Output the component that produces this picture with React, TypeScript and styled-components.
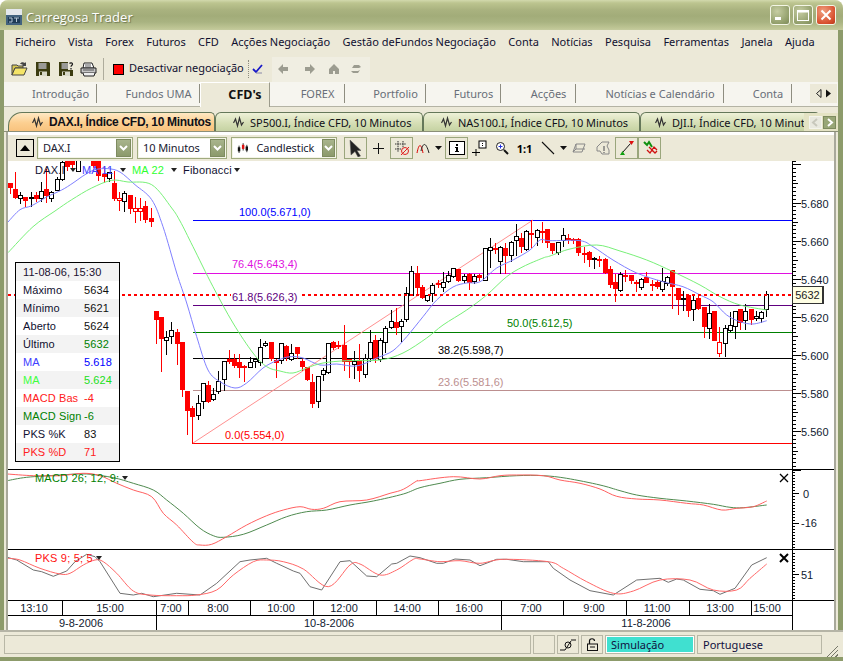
import React from "react";
import styled, { createGlobalStyle } from "styled-components";

const Global = createGlobalStyle`
  html, body { margin: 0; padding: 0; background: #fff; }
  #root { width: 843px; height: 661px; }
`;

const UI = `"Noto Sans", "Liberation Sans", sans-serif`;
const CH = `"Liberation Sans", Arial, sans-serif`;

const Win = styled.div`
  width: 843px; height: 661px; display: flex; flex-direction: column; overflow: hidden;
  background: #ece9d8; border-radius: 8px 8px 0 0; font-family: ${UI}; font-size: 11px; color: #000;
`;
const TitleBar = styled.div`
  height: 30px; flex: none; display: flex; align-items: center; padding: 3px 7px 0 6px; box-sizing: border-box;
  background: linear-gradient(180deg, #d2d9ad 0, #bcc48f 3px, #a9b27f 10px, #a2ac79 16px, #a9b381 22px, #bec594 28px, #c5cb9e 30px);
`;
const TitleText = styled.span`
  margin-left: 4px; flex: 1; color: #fff; font: 13px "Open Sans", sans-serif; letter-spacing: 0.1px; text-shadow: 1px 1px 1px #6b7550;
`;
const WinBtn = styled.div<{ $close?: boolean }>`
  width: 20px; height: 20px; margin: -4px 0 0 3px; box-sizing: border-box; border: 1px solid #f4f6e6; border-radius: 3px;
  display: flex; align-items: center; justify-content: center;
  background: ${p => p.$close ? "radial-gradient(circle at 35% 30%, #f0a080, #d8502e 70%, #b83a1c)" : "radial-gradient(circle at 35% 30%, #c6cda2, #8f9c68 75%, #7e8a5c)"};
`;
const Body = styled.div`
  flex: 1; min-height: 0; display: flex; flex-direction: column;
  border-left: 4px solid #8d9b6b; border-right: 5px solid #8d9b6b; box-sizing: border-box;
`;
const MenuBar = styled.div`
  height: 26px; flex: none; display: flex; align-items: center; padding: 0 0 4px 11px; gap: 12.4px; color: #101030; box-sizing: border-box;
`;
const MenuItem = styled.span`white-space: pre;`;
const ToolBar = styled.div`
  height: 26px; flex: none; display: flex; align-items: center; padding-left: 7px;
`;
const IconSlot = styled.span<{ $w: number; $ml?: number }>`
  width: ${p => p.$w}px; margin-left: ${p => p.$ml ?? 0}px; flex: none; display: flex; align-items: center; justify-content: center;
`;
const Sep = styled.span`width: 1px; height: 22px; background: #aeac9c; margin: 0 9px 0 6px; flex: none;`;
const RedSquare = styled.span`width: 9px; height: 9px; background: #f00; border: 1px solid #000; flex: none; margin-right: 5px;`;
const ToolLabel = styled.span`color: #101030; width: 119px; flex: none; white-space: nowrap; padding-bottom: 3px; letter-spacing: -0.05px;`;
const DotSep = styled.span`width: 0; height: 18px; border-left: 1px dotted #8e8d80; flex: none;`;
const NavGroup = styled.div`
  margin-left: 9px; height: 25px; display: flex; align-items: center; background: #f0eee2; padding-left: 5px; width: 98px; box-sizing: border-box; flex: none;
`;
const NavTabs = styled.div`
  height: 25px; flex: none; display: flex; align-items: stretch; background: #f6f5ef; border-bottom: 1px solid #b4b3a4; box-sizing: border-box;
`;
const NavTab = styled.div<{ $w: number; $active?: boolean }>`
  width: ${p => p.$w}px; flex: none; display: flex; align-items: center; justify-content: center; box-sizing: border-box; position: relative; padding: 0 0 2px 20px;
  color: ${p => p.$active ? "#111" : "#686e78"}; font-weight: ${p => p.$active ? 700 : 400}; font-size: ${p => p.$active ? 12.5 : 11}px;
  background: ${p => p.$active ? "#ece9d8" : "transparent"};
  ${p => p.$active ? "border: 1px solid #fff; border-right: 1px solid #9c9b8c; border-bottom: none; margin-bottom:-1px;" : ""}
  &::after { content: ""; position: absolute; right: 0; top: 2px; bottom: 3px; width: 1px; background: ${p => p.$active ? "transparent" : "#8e8d80"}; }
`;
const NavArrows = styled.div`
  margin-left: auto; margin-right: 1px; width: 27px; background: #ece9d8; margin-top: 2px; margin-bottom: 3px; display: flex; align-items: center; justify-content: space-around; padding: 0 4px; box-sizing: border-box;
`;
const DocStrip = styled.div`
  height: 25px; flex: none; display: flex; align-items: flex-end; padding-left: 4px; position: relative; overflow: hidden; border-bottom: 1px solid #8b8f78; box-sizing: border-box;
`;
const DocTab = styled.div<{ $w: number; $active?: boolean; $pl: number }>`
  width: ${p => p.$w}px; flex: none; height: 19px; box-sizing: border-box; position: relative; display: flex; align-items: center; padding-left: ${p => p.$pl}px; gap: 5px; white-space: nowrap; overflow: hidden;
  font-size: ${p => p.$active ? 12 : 11}px; font-weight: ${p => p.$active ? 700 : 400}; color: #101018;
  background: ${p => p.$active ? "linear-gradient(180deg, #ffe8c4, #fccf90 55%, #f8c37e)" : "linear-gradient(180deg, #eef1d8, #d6dfb6 55%, #c5d2a2)"};
  border: 1px solid #65785a; border-bottom: none; border-radius: ${p => p.$active ? "14px" : "6px"} 5px 0 0;
  ${p => p.$active ? "font-family: " + CH + "; letter-spacing: -0.3px;" : "letter-spacing: -0.03px;"}
`;
const DocScroll = styled.div`
  position: absolute; right: 0; top: 6px; width: 34px; height: 18px; background: #e4e3c4; display: flex; align-items: center; gap: 1px; padding-left: 5px; box-sizing: border-box;
`;
const DocBtn = styled.div<{ $on?: boolean }>`
  width: 13px; height: 13px; box-sizing: border-box; border: 1px solid ${p => p.$on ? "#7d8a5e" : "#f4f4ec"}; background: ${p => p.$on ? "#98a676" : "#e9e9df"}; display: flex; align-items: center; justify-content: center;
`;
const ChartFrame = styled.div`
  flex: 1; min-height: 0; display: flex; flex-direction: column; padding-top: 3px; box-sizing: border-box; background: #fff;
  border-right: 2px solid #a8a89a; border-left: 2px solid #a8a89a; margin-left: 2px; width: 830px;
`;
const ChartTools = styled.div`
  height: 26px; flex: none; display: flex; align-items: center; background: #ece9d8; padding-left: 8px;
`;
const Toggle = styled.div`
  width: 18px; height: 18px; box-sizing: border-box; border: 1px solid #000; display: flex; align-items: center; justify-content: center; margin-right: 3px; flex: none;
  &::before { content: ""; border: 5px solid transparent; border-bottom: 6px solid #000; border-top: 0; }
`;
const Combo = styled.div<{ $w: number }>`
  width: ${p => p.$w}px; height: 22px; box-sizing: border-box; border: 1px solid #a0ab7f; background: #fff; display: flex; align-items: center; padding-left: 5px; margin-right: 4px; flex: none; gap: 8px; font-size: 11px; letter-spacing: -0.1px; color: #202030; box-shadow: inset 0 0 0 1px #f4f4e8;
`;
const ComboText = styled.span`flex: 1; white-space: nowrap; margin-top: -2px;`;
const ComboBtn = styled.div`
  width: 15px; height: 18px; margin-right: 1px; background: linear-gradient(180deg, #a8b48c, #8c9a6c); border: 1px solid #7e8b60; box-sizing: border-box; display: flex; align-items: center; justify-content: center;
`;
const ToolBtn = styled.div<{ $w: number; $on?: boolean; $ml?: number }>`
  width: ${p => p.$w}px; height: 22px; flex: none; box-sizing: border-box; margin-left: ${p => p.$ml ?? 0}px; display: flex; align-items: center; justify-content: center;
  border: ${p => p.$on ? "1.5px solid #9aa67c" : "0"};
`;
const Canvas = styled.div`position: relative; width: 826px; height: 469px; flex: none; background: #fff;`;
const ChartSvg = styled.svg`display: block;`;
const Legend = styled.div<{ $top: number }>`
  position: absolute; left: 27px; top: ${p => p.$top}px; display: flex; align-items: center; font: 11px ${CH}; height: 14px; white-space: nowrap;
`;
const LegendText = styled.span<{ $c: string; $w?: number }>`color: ${p => p.$c}; letter-spacing: 0.2px; flex: none; ${p => p.$w ? `width: ${p.$w}px;` : ""}`;
const Caret = styled.span<{ $mr?: number }>`
  flex: none; width: 0; height: 0; border: 3px solid transparent; border-top: 4px solid #222; border-bottom: 0; margin: 0 ${p => p.$mr ?? 0}px 0 3px;
`;
const Info = styled.div`
  position: absolute; left: 7px; top: 101px; width: 105px; background: #fff; border: 1px solid #000; font: 11px ${CH}; box-sizing: border-box; letter-spacing: 0.1px;
`;
const InfoRow = styled.div<{ $alt?: boolean }>`
  height: 18px; display: grid; grid-template-columns: 61px 1fr; align-items: center; padding-left: 7px; background: ${p => p.$alt ? "#f3f3f3" : "#fff"}; white-space: nowrap;
`;
const InfoHead = styled(InfoRow)`display: block; line-height: 18px; color: #201030;`;
const InfoCell = styled.span<{ $c: string }>`color: ${p => p.$c};`;
const PriceTag = styled.div`
  position: absolute; left: 784px; top: 125px; width: 32px; height: 18px; box-sizing: border-box; background: #ffffe4; border: 1px solid #333; border-right: 2px solid #333; font: 11px ${CH}; text-align: center; line-height: 16px; color: #222;
`;
const Status = styled.div`
  height: 31px; flex: none; margin: 0 -5px 0 -4px; padding: 3px 5px 3px 4px; box-sizing: border-box; display: flex; align-items: stretch; gap: 2px; background: #ece9d8; border-bottom: 4px solid #8d9b6b; border-top: 2px solid #b5b4a6; position: relative;
`;
const Pane = styled.div<{ $w: number; $teal?: boolean }>`
  width: ${p => p.$w}px; flex: none; box-sizing: border-box; border: 1px solid #b8b7a6; display: flex; align-items: center; justify-content: ${p => p.$teal ? "flex-start" : "center"};
  ${p => p.$teal ? "background: #40e0d0; outline: 1px solid #fff; outline-offset: -2px; padding-left: 5px; color: #101040;" : ""}
`;
const PaneText = styled(Pane)`justify-content: flex-start; padding-left: 5px; color: #101040;`;
const Grip = styled.div`
  position: absolute; right: 5px; bottom: 0; width: 13px; height: 13px;
  background: repeating-linear-gradient(135deg, #ece9d8 0 1px, #77776a 1px 2px, #ece9d8 2px 3px);
  clip-path: polygon(100% 0, 100% 100%, 0 100%);
`;

/* ------- chart data: [high, top of body, bottom of body, low, kind]; y in 3× units measured from y=190 ------- */
type C = [number, number, number, number, "w" | "r" | "h"];
const candles: C[] = [
  [-21,-21,-9,9,"r"],[-58,-3,20,24,"r"],[4,16,24,39,"w"],[19,22,29,47,"r"],[2,21,24,49,"w"],[4,16,24,34,"r"],[-26,4,24,34,"w"],[-66,-3,14,37,"r"],
  [-1,7,23,32,"w"],[-41,-33,-1,-1,"w"],[-100,-84,-33,-31,"w"],[-100,-100,-71,-60,"r"],[-100,-100,-78,-70,"r"],[-100,-100,-58,-58,"w"],[-200,-200,-190,-190,"w"],[-200,-200,-190,-190,"w"],
  [-100,-100,-76,-70,"r"],[-100,-86,-46,-31,"r"],[-76,-48,-43,-24,"r"],[-56,-54,-36,-26,"w"],
  [-60,-21,25,30,"r"],[4,24,31,59,"h"],[0,9,32,62,"w"],[15,15,53,68,"r"],[18,55,62,95,"h"],[22,55,62,90,"h"],[30,47,87,95,"r"],[50,85,93,107,"r"],
  [365,364,386,458,"r"],[380,381,444,543,"r"],[420,440,451,492,"w"],[393,421,439,460,"w"],[415,427,458,522,"r"],[457,457,598,617,"r"],[600,604,660,732,"r"],[645,654,678,760,"r"],
  [612,640,674,686,"w"],[575,579,634,655,"w"],[570,586,632,635,"r"],[590,611,628,630,"w"],[540,572,604,608,"w"],[512,514,566,600,"w"],[478,508,514,520,"r"],[490,507,524,530,"r"],
  [490,516,532,560,"r"],[522,528,532,572,"r"],[497,517,530,532,"w"],[500,506,513,530,"w"],[445,472,515,525,"w"],[450,458,466,468,"w"],[455,457,505,510,"r"],[505,510,515,562,"r"],
  [455,460,510,520,"w"],[463,468,500,510,"r"],[458,490,506,510,"w"],[470,472,490,505,"r"],[505,512,527,540,"r"],[530,532,568,570,"r"],[548,576,639,650,"r"],[558,559,634,650,"w"],
  [530,540,553,570,"w"],[458,460,547,548,"w"],[450,456,472,478,"r"],[450,465,468,475,"r"],[402,465,512,540,"r"],[507,507,513,560,"r"],[480,512,522,565,"w"],[460,510,540,572,"r"],
  [490,505,553,560,"w"],[418,457,505,512,"w"],[432,450,505,516,"r"],[440,450,506,513,"w"],[405,415,457,485,"w"],[357,394,410,415,"w"],[350,396,412,432,"r"],[385,394,409,452,"w"],
  [288,308,388,392,"w"],[225,244,314,316,"w"],[226,250,292,312,"r"],[283,290,322,325,"r"],[312,314,331,333,"w"],[275,284,308,333,"w"],[268,278,281,292,"r"],[242,277,290,303,"w"],
  [240,256,272,275,"w"],[232,233,258,260,"w"],[235,238,269,272,"r"],[250,257,270,275,"w"],[245,251,276,296,"r"],[250,257,272,278,"w"],[250,254,260,270,"r"],[170,175,269,270,"w"],
  [142,170,181,230,"w"],[157,175,178,190,"r"],[165,170,214,248,"w"],[155,175,196,250,"r"],[150,157,194,212,"w"],[98,137,151,195,"w"],[125,143,168,185,"r"],[118,124,177,180,"w"],
  [88,130,133,170,"r"],[115,119,142,165,"w"],[92,122,125,155,"r"],[115,118,155,170,"r"],
  [158,160,180,190,"r"],[152,156,187,192,"w"],[112,136,150,168,"w"],[130,144,147,158,"r"],[140,146,148,158,"r"],[142,148,185,195,"r"],[168,189,191,215,"r"],[180,186,207,228,"r"],
  [198,204,206,233,"w"],[195,206,208,228,"r"],[200,208,245,250,"r"],[226,237,282,291,"r"],[250,277,293,332,"r"],[243,252,301,302,"w"],[238,254,257,272,"r"],[255,256,270,280,"r"],
  [268,276,279,303,"r"],[262,268,290,296,"w"],[243,262,275,277,"r"],[268,282,285,300,"r"],[268,276,288,295,"r"],[232,272,296,302,"w"],[255,262,278,285,"w"],[238,239,287,353,"r"],
  [293,294,328,372,"r"],[300,323,326,360,"w"],[315,316,361,378,"r"],[315,331,358,390,"w"],[312,323,355,358,"r"],[350,352,407,440,"r"],[340,370,415,445,"w"],[362,364,449,450,"r"],
  [408,457,490,497,"h"],[402,415,460,497,"w"],[363,404,420,422,"w"],[362,364,408,445,"w"],[357,357,395,416,"r"],[340,364,390,416,"w"],[355,358,388,403,"r"],[360,377,383,390,"w"],
  [360,365,384,396,"w"],[300,313,358,378,"w"],
];
const dx = (766.3 - 9.67) / (candles.length - 1);
const cx = (i: number) => Math.round(766.3 - (candles.length - 1 - i) * dx) + 0.5;
const Y = (v: number) => Math.round(190 + v / 3) + 0.5;

const smooth = (a: number[][]) => {
  let d = `M${a[0][0]} ${a[0][1]}`;
  for (let i = 0; i < a.length - 1; i++) {
    const p0 = a[i - 1] ?? a[i], p1 = a[i], p2 = a[i + 1], p3 = a[i + 2] ?? p2;
    const c1x = p1[0] + (p2[0] - p0[0]) / 6, c1y = p1[1] + (p2[1] - p0[1]) / 6;
    const c2x = p2[0] - (p3[0] - p1[0]) / 6, c2y = p2[1] - (p3[1] - p1[1]) / 6;
    d += `C${c1x.toFixed(1)} ${c1y.toFixed(1)} ${c2x.toFixed(1)} ${c2y.toFixed(1)} ${p2[0].toFixed(1)} ${p2[1].toFixed(1)}`;
  }
  return d;
};
const jag = (a: number[][]) => "M" + a.map(p => `${p[0].toFixed(1)} ${p[1].toFixed(1)}`).join("L");

const blue = smooth([[8,222],[20,209.7],[31.7,205.7],[46.7,197],[61.7,190],[73,183],[85,174.7],[95,169.7],[108,168.7],[120,172],[135,184.7],[151.7,199.7],[163,226.7],[176.7,273],[186.7,303],[196.7,336.7],[208,370],[220,381.7],[235,388],[246.7,383],[263,368],[276.7,360.7],[290,356.7],[303,358],[320,365],[336.7,364],[356.7,366],[376.7,358],[393,350.7],[406.7,336.7],[423,316.7],[436.7,300],[453,287],[466.7,283],[480,281.7],[496.7,268],[513,260],[530,250],[540,240],[550,240.7],[580,240.7],[593,246.7],[613,260],[636.7,273],[663,281.7],[683,286.7],[700,295],[713,301.7],[726.7,315],[740,321.7],[753,324],[766.7,320.7]]);
const green = smooth([[8,252.7],[33,226.7],[55,211],[71.7,199.7],[91.7,188],[111.7,180.3],[128,182],[151.7,184.7],[171.7,208],[180,221],[193,246.7],[213,286.7],[233,323],[253,353],[266.7,366.7],[280,371],[293,373],[306.7,368],[323,363],[346.7,360.7],[380,360],[403,353],[426.7,338],[443,325],[466.7,310],[486.7,295],[506.7,276.7],[523,266.7],[543,258],[550,256],[570,249],[596.7,245],[620,251],[646.7,260],[673,271.7],[700,285],[720,296.7],[740,305],[766.7,310]]);

const z6 = (a: number[][]) => a.map(([x, y]) => [x / 3, 465 + y / 3]);
const z7 = (a: number[][]) => a.map(([x, y]) => [420 + x / 3, 465 + y / 3]);
const macdR = smooth([...z6([[22,27],[100,32],[180,32],[250,25],[300,32],[350,55],[400,75],[455,95],[490,145],[530,180],[580,232],[600,240],[635,238],[680,215],[740,180],[800,152],[850,135],[900,125],[935,133],[970,130],[1020,110],[1100,105],[1170,85],[1210,73],[1250,48]]),...z7([[0,47],[100,35],[180,42],[240,32],[290,30],[370,32],[420,45],[480,55],[540,72],[590,94],[650,102],[720,105],[800,115],[850,120],[905,135],[950,130],[1000,125],[1040,108]])]);
const macdG = smooth([...z6([[22,47],[80,37],[180,30],[260,27],[340,38],[400,55],[460,75],[500,105],[550,145],[600,190],[640,212],[670,217],[730,208],[800,180],[860,155],[920,140],[980,135],[1050,120],[1120,108],[1210,87]]),...z7([[0,68],[60,55],[120,43],[200,38],[290,32],[370,32],[440,40],[540,60],[600,77],[650,90],[720,100],[800,108],[880,118],[930,127],[970,128],[1040,120]])]);
const pksK = jag([...z6([[22,277],[50,285],[100,315],[125,320],[160,334],[200,318],[225,290],[260,268],[285,275],[300,290],[360,385],[400,390],[425,385],[460,395],[530,385],[600,390],[650,355],[720,290],[750,285],[800,280],[830,295],[880,318],[900,325],[930,365],[965,375],[1020,290],[1050,287],[1100,333],[1130,335],[1175,297],[1190,295],[1230,273]]),...z7([[0,278],[50,295],[70,295],[105,282],[150,285],[180,302],[230,283],[260,283],[310,290],[385,290],[400,310],[450,345],[510,377],[580,390],[650,345],[720,340],[745,352],[770,342],[790,345],[840,373],[880,377],[900,388],[945,370],[995,300],[1040,278]])]);
const pksD = smooth([...z6([[22,280],[60,285],[120,310],[180,327],[210,325],[250,300],[285,285],[310,290],[350,325],[400,378],[450,390],[530,392],[590,390],[650,375],[700,330],[760,290],[800,285],[850,290],[910,312],[985,365],[1050,300],[1080,297],[1140,330],[1190,315],[1240,283]]),...z7([[0,282],[60,290],[120,287],[180,295],[250,283],[385,290],[430,310],[500,350],[580,385],[640,378],[720,345],[810,345],[880,375],[950,375],[990,340],[1040,297]])]);

const fibs = [
  { y: 220.5, c: "#0000ff", t: "100.0(5.671,0)", x: 239, ty: 216 },
  { y: 273.5, c: "#e010e0", t: "76.4(5.643,4)", x: 232, ty: 268 },
  { y: 305.5, c: "#600080", t: "61.8(5.626,3)", x: 232, ty: 301 },
  { y: 332.5, c: "#008000", t: "50.0(5.612,5)", x: 507, ty: 327 },
  { y: 358.5, c: "#000", t: "38.2(5.598,7)", x: 438, ty: 354 },
  { y: 390.5, c: "#bc8f8f", t: "23.6(5.581,6)", x: 438, ty: 386 },
  { y: 443.5, c: "#f00", t: "0.0(5.554,0)", x: 225, ty: 439 },
];
const priceTicks: { y: number; l: number; t?: string }[] = [];
for (let p = 5540; p <= 5702; p += 2) {
  const y = Math.round(202.5 + (5680 - p) * 1.908) + 0.5;
  const maj = p % 20 === 0;
  priceTicks.push({ y, l: maj ? 8 : p % 10 === 0 ? 5 : 3, t: maj && p >= 5560 && p <= 5680 ? "5." + String(p).slice(1) : undefined });
}
const timeSeps = [62, 156, 188, 250, 313, 376, 438, 501, 563, 626, 689, 751];
const timeLabels: [string, number][] = [["13:10",34],["15:00",110],["7:00",171],["8:00",218],["10:00",281],["12:00",344],["14:00",407],["16:00",469],["7:00",531],["9:00",594],["11:00",657],["13:00",720],["15:00",767]];
const dateLabels: [string, number][] = [["9-8-2006",81],["10-8-2006",329],["11-8-2006",646]];

const Chart = () => (
  <ChartSvg width={826} height={469} viewBox="8 161 826 469" fontFamily={CH} fontSize={11}>
    {fibs.map(f => <line key={f.t} x1={193} x2={792} y1={f.y} y2={f.y} stroke={f.c} />)}
    <line x1={193} y1={443} x2={533} y2={220} stroke="#ff9090" />
    <g shapeRendering="crispEdges">
      {candles.map((c, i) => {
        const x = cx(i), col = c[4] === "w" ? "#000" : "#f00";
        const top = Y(c[1]), bot = Math.max(Y(c[2]), Y(c[1]) + 1);
        return (
          <g key={i}>
            <line x1={x} x2={x} y1={Y(c[0])} y2={Y(c[3])} stroke={col} />
            {c[4] === "r"
              ? <rect x={x - 2.5} y={top - 0.5} width={5} height={bot - top + 1} fill="#f00" />
              : <rect x={x - 2} y={top} width={4} height={bot - top} fill="#fff" stroke={col} />}
          </g>
        );
      })}
    </g>
    <path d={blue} fill="none" stroke="#8080ff" />
    <path d={green} fill="none" stroke="#78f078" />
    <line x1={8} x2={792} y1={295} y2={295} stroke="#f00" strokeWidth={2} strokeDasharray="3 3" />
    <rect x={231} y={291} width={68} height={11} fill="#fff" />
    {fibs.map(f => <text key={f.t} x={f.x} y={f.ty} fill={f.c}>{f.t}</text>)}

    <path d={macdG} fill="none" stroke="#4f8a4f" />
    <path d={macdR} fill="none" stroke="#ff6060" />
    <path d={pksK} fill="none" stroke="#707070" />
    <path d={pksD} fill="none" stroke="#ff6868" />

    <g stroke="#000" shapeRendering="crispEdges">
      <line x1={8} x2={834} y1={469.5} y2={469.5} />
      <line x1={8} x2={834} y1={549.5} y2={549.5} />
      <line x1={8} x2={834} y1={600.5} y2={600.5} />
      <line x1={8} x2={792} y1={615.5} y2={615.5} />
      <line x1={792.5} x2={792.5} y1={161} y2={630} />
      {priceTicks.map(t => <line key={t.y} x1={793} x2={793 + t.l} y1={t.y} y2={t.y} />)}
      {Array.from({ length: 26 }, (_, i) => { const y = 472 + i * 3; const m = y === 493 || y === 523; return <line key={y} x1={793} x2={m ? 799 : 795} y1={y + 0.5} y2={y + 0.5} />; })}
      {Array.from({ length: 16 }, (_, i) => { const y = 553 + i * 3; const m = y === 574; return <line key={y} x1={793} x2={m ? 799 : 795} y1={y + 0.5} y2={y + 0.5} />; })}
      {timeSeps.map(x => <line key={x} x1={x + 0.5} x2={x + 0.5} y1={600} y2={615} />)}
      <line x1={156.5} x2={156.5} y1={615} y2={630} />
      <line x1={501.5} x2={501.5} y1={615} y2={630} />
    </g>
    {priceTicks.filter(t => t.t).map(t => <text key={t.y} x={801} y={t.y + 4} fill="#102030">{t.t}</text>)}
    <text x={803} y={498} fill="#102030">0</text>
    <text x={801} y={527} fill="#102030">-16</text>
    <text x={801} y={579} fill="#102030">51</text>
    {timeLabels.map(([t, x]) => <text key={x} x={x} y={612} textAnchor="middle" fill="#102030">{t}</text>)}
    {dateLabels.map(([t, x]) => <text key={x} x={x} y={627} textAnchor="middle" fill="#102030">{t}</text>)}
    <path d="M780 474l8 8M788 474l-8 8" stroke="#000" strokeWidth={1.3} fill="none" />
    <path d="M780 554l8 8M788 554l-8 8" stroke="#000" strokeWidth={2} fill="none" />
  </ChartSvg>
);

/* ------- icons ------- */
const Wave = () => (
  <svg width="12" height="12" viewBox="0 0 12 12"><path d="M0.5 7l2-4 2 7 2-8 2 7 2-3" fill="none" stroke="#333" strokeWidth="1.2" /></svg>
);
const Chevron = ({ c = "#fff", left = false }: { c?: string; left?: boolean }) => (
  <svg width="9" height="9" viewBox="0 0 9 9"><path d={left ? "M6 1L2 4.5 6 8" : "M3 1l4 3.5L3 8"} fill="none" stroke={c} strokeWidth="2" /></svg>
);
const DownChevron = () => (
  <svg width="9" height="8" viewBox="0 0 9 8"><path d="M1 2l3.5 3.5L8 2" fill="none" stroke="#fff" strokeWidth="2" /></svg>
);
const Floppy = ({ q }: { q?: boolean }) => (
  <svg width="16" height="16" viewBox="0 0 16 16">
    <path d="M1 1h13l1 1v13H1z" fill="#3c3c10" />
    <rect x="3.5" y="2" width="8" height="6" fill="#9a9a96" />
    <rect x="4" y="10.5" width="8" height="4.5" fill="#d8d8c8" />
    <rect x="5" y="11" width="2" height="3" fill="#3c3c10" />
    {q && <path d="M10 1h6v8h-6z" fill="#ece9d8" />}
    {q && <path d="M11.5 2.5c1-1.200 3.200-.8 3 .8-.1 1-1.500 1-1.500 2.500M13 7v1.500" fill="none" stroke="#222" strokeWidth="1.300" />}
  </svg>
);
const Folder = () => (
  <svg width="17" height="16" viewBox="0 0 17 16">
    <path d="M1 4h5l1 1h5v2H4L1 14z" fill="#d8c850" stroke="#444" />
    <path d="M1 14l3-7h12l-3 7z" fill="#f4e468" stroke="#444" />
    <path d="M9 3c1-2 3-2 5-1l1-1v4h-4l1-1c-1-1-2-1-3-1z" fill="#444" />
  </svg>
);
const Printer = () => (
  <svg width="17" height="15" viewBox="0 0 17 15">
    <path d="M4 1h8l2 5H3z" fill="#fff" stroke="#222" />
    <path d="M1 6h15v5H1z" fill="#c8c8c8" stroke="#222" />
    <path d="M3 11l1 3h10l1-3" fill="#eee" stroke="#222" />
    <path d="M5 3h6M5 5h6M3 8h11" stroke="#555" />
  </svg>
);
const Check = () => (
  <svg width="11" height="10" viewBox="0 0 11 10">
    <path d="M1 5l3 3 6-7" fill="none" stroke="#1818c8" strokeWidth="1.800" />
    <path d="M4 9h6" stroke="#8888a8" />
  </svg>
);
const GrayArrow = ({ d }: { d: string }) => (
  <svg width="12" height="12" viewBox="0 0 12 12"><path d={d} fill="#9c9c90" /></svg>
);
const Cursor = () => (
  <svg width="14" height="18" viewBox="0 0 14 18"><path d="M1 1l11 10.500H8l3.500 5.500-2.500 1L6 12.500 2 16z" fill="#222" stroke="#555" strokeWidth=".5" /></svg>
);
const Plus = () => <svg width="13" height="13" viewBox="0 0 13 13"><path d="M6.500 1v11M1 6.500h11" stroke="#111" /></svg>;
const GridOff = () => (
  <svg width="16" height="16" viewBox="0 0 16 16"><path d="M4 1v11M9 1v7M1 4h11M1 9h6" stroke="#333" strokeDasharray="1.500 .8" fill="none" /><circle cx="11" cy="11" r="3.500" fill="none" stroke="#e02020" /><path d="M7 15l8-8" stroke="#e02020" /></svg>
);
const Indic = () => <svg width="14" height="12" viewBox="0 0 14 12"><path d="M1 11C3 1 5 1 7 11" fill="none" stroke="#d00" /><path d="M5 9C7 0 10 0 13 11" fill="none" stroke="#222" /></svg>;
const SmallCaret = () => <svg width="7" height="4" viewBox="0 0 7 4"><path d="M0 0h7L3.500 4z" fill="#111" /></svg>;
const InfoIcon = () => <svg width="16" height="14" viewBox="0 0 16 14"><rect x=".5" y=".5" width="15" height="13" fill="#fff" stroke="#000" /><path d="M7 3h2v2H7zM6 6h3v4h1v1H6v-1h1V7H6z" fill="#000" /></svg>;
const CrossBox = () => <svg width="16" height="16" viewBox="0 0 16 16"><path d="M5 9v7M1 12.500h8" stroke="#000" /><rect x="8" y="1" width="7" height="7" fill="#fff" stroke="#000" /><path d="M11 3h1v1h-1zM11 5h1v1h-1z" /></svg>;
const Magnifier = () => <svg width="14" height="14" viewBox="0 0 14 14"><circle cx="5.500" cy="5.500" r="4" fill="#fff" stroke="#222" /><path d="M9 9l4 4" stroke="#111" strokeWidth="2" /><path d="M5.500 3.500v4M3.500 5.500h4" stroke="#2030e0" /></svg>;
const Line = () => <svg width="14" height="14" viewBox="0 0 14 14"><path d="M1 1l12 12" stroke="#111" strokeWidth="1.100" /></svg>;
const Eraser = () => <svg width="14" height="10" viewBox="0 0 14 10"><path d="M4 1h9L10 9H1zM1 9l3-3h9M4 6V1" fill="#ece9d8" stroke="#888" /></svg>;
const Bell = () => <svg width="14" height="14" viewBox="0 0 14 14"><path d="M1 6l5-5h7l-2 4 2 4v4H6L4 10H1z" fill="none" stroke="#888" /><path d="M8 5v5M8 11v1" stroke="#777" strokeWidth="1.400" /></svg>;
const AutoFit = () => <svg width="16" height="16" viewBox="0 0 16 16"><path d="M3.500 12.500l8-9" stroke="#111" /><path d="M10 1h5l-2.500 4z" fill="#e01010" /><path d="M1 15h5l-2.500-4z" fill="#10a010" /></svg>;
const MultiTrade = () => <svg width="16" height="16" viewBox="0 0 16 16"><path d="M2 2l3 3 2-3 3 5" stroke="#109010" strokeWidth="2" fill="none" /><path d="M5 10l3 3 2-3 3 3 2-2M7 7l3 3 2-3 3 3" stroke="#d01010" strokeWidth="1.300" fill="none" /></svg>;
const Candles = () => (
  <svg width="14" height="13" viewBox="0 0 14 13"><path d="M2.500 3v9M7.500 0v9M12 2v9" stroke="#111" /><rect x="1" y="5" width="3" height="5" fill="#111" /><rect x="6" y="2" width="3" height="5" fill="#e01010" /><rect x="10.500" y="4" width="3" height="5" fill="#111" /></svg>
);
const Plug = () => <svg width="16" height="12" viewBox="0 0 16 12"><path d="M0 11h5M11 1h5" stroke="#111" /><circle cx="8" cy="6" r="3" fill="none" stroke="#111" /><path d="M5 11l6-9" stroke="#111" /></svg>;
const Lock = () => <svg width="11" height="13" viewBox="0 0 11 13"><rect x=".5" y="6" width="10" height="6.500" fill="none" stroke="#111" /><path d="M2.500 6V3c0-3 5-3 5 0" fill="none" stroke="#111" strokeWidth="1.200" /><path d="M3 9h5" stroke="#111" /></svg>;
const AppLogo = () => (
  <svg width="16" height="16" viewBox="0 0 16 16"><rect width="16" height="6" fill="#e4e8ec" /><rect y="6" width="16" height="10" fill="#42627e" /><rect x="2" y="8" width="12" height="6" fill="#1f3b56" /><path d="M3 9h3v4H3M8 9h5M10.500 9v4" stroke="#b4c6d6" fill="none" /></svg>
);
const MinGlyph = () => <svg width="12" height="12" viewBox="0 0 12 12"><rect x="1" y="8" width="6" height="3" fill="#fff" /></svg>;
const MaxGlyph = () => <svg width="14" height="14" viewBox="0 0 14 14"><rect x="1.500" y="2.500" width="11" height="10" fill="none" stroke="#fff" /><rect x="1" y="2" width="12" height="2.500" fill="#fff" /></svg>;
const CloseGlyph = () => <svg width="12" height="12" viewBox="0 0 12 12"><path d="M1.500 1.500l9 9M10.500 1.500l-9 9" stroke="#fff" strokeWidth="2" /></svg>;

const menu = ["Ficheiro","Vista","Forex","Futuros","CFD","Acções Negociação","Gestão deFundos Negociação","Conta","Notícias","Pesquisa","Ferramentas","Janela","Ajuda"];
const navs: { t: string; w: number; a?: boolean }[] = [
  { t: "Introdução", w: 93 },{ t: "Fundos UMA", w: 103 },{ t: "CFD's", w: 70, a: true },{ t: "FOREX", w: 75 },{ t: "Portfolio", w: 81 },{ t: "Futuros", w: 75 },{ t: "Acções", w: 75 },{ t: "Notícias e Calendário", w: 148 },{ t: "Conta", w: 68 },
];
const docs = [
  { t: "DAX.I, Índice CFD, 10 Minutos", w: 207, pl: 23, a: true },
  { t: "SP500.I, Índice CFD, 10 Minutos", w: 208, pl: 17 },
  { t: "NAS100.I, Índice CFD, 10 Minutos", w: 217, pl: 17 },
  { t: "DJI.I, Índice CFD, 10 Minutos", w: 180, pl: 14 },
];
const rows: [string, string, string, string][] = [
  ["Máximo","5634","#101030","#101010"],["Mínimo","5621","#101030","#101010"],["Aberto","5624","#101030","#101010"],["Último","5632","#101030","#008000"],
  ["MA","5.618","#4040ff","#0000ff"],["MA","5.624","#40ff40","#20e020"],["MACD Bas","-4","#ff2020","#ff2020"],["MACD Sign","-6","#008000","#008000"],["PKS %K","83","#101030","#101010"],["PKS %D","71","#ff2020","#ff2020"],
];

export default function App() {
  return (
    <Win>
      <Global />
      <TitleBar>
        <AppLogo />
        <TitleText>Carregosa Trader</TitleText>
        <WinBtn><MinGlyph /></WinBtn>
        <WinBtn><MaxGlyph /></WinBtn>
        <WinBtn $close><CloseGlyph /></WinBtn>
      </TitleBar>
      <Body>
        <MenuBar>{menu.map(m => <MenuItem key={m}>{m}</MenuItem>)}</MenuBar>
        <ToolBar>
          <IconSlot $w={17}><Folder /></IconSlot>
          <IconSlot $w={16} $ml={7}><Floppy /></IconSlot>
          <IconSlot $w={16} $ml={7}><Floppy q /></IconSlot>
          <IconSlot $w={17} $ml={6}><Printer /></IconSlot>
          <Sep />
          <RedSquare />
          <ToolLabel>Desactivar negociação</ToolLabel>
          <DotSep />
          <IconSlot $w={12} $ml={2}><Check /></IconSlot>
          <NavGroup>
            <IconSlot $w={12}><GrayArrow d="M1 6l5-5v3h5v4H6v3z" /></IconSlot>
            <IconSlot $w={12} $ml={15}><GrayArrow d="M11 6L6 1v3H1v4h5v3z" /></IconSlot>
            <IconSlot $w={12} $ml={12}><GrayArrow d="M6 1l5 5v5H7V8H5v3H1V6z" /></IconSlot>
            <IconSlot $w={12} $ml={10}><GrayArrow d="M2 5l2-3h5l2 2-2 1H4zM1 8l2 2h5l2-3-2 1H3z" /></IconSlot>
          </NavGroup>
        </ToolBar>
        <NavTabs>
          {navs.map(n => <NavTab key={n.t} $w={n.w} $active={n.a}>{n.t}</NavTab>)}
          <NavArrows>
            <svg width="6" height="9" viewBox="0 0 6 9"><path d="M5 .5v8L.5 4.500z" fill="none" stroke="#222" /></svg>
            <svg width="6" height="9" viewBox="0 0 6 9"><path d="M1 .5v8l5-4z" fill="#111" /></svg>
          </NavArrows>
        </NavTabs>
        <DocStrip>
          {docs.map(d => <DocTab key={d.t} $w={d.w} $pl={d.pl} $active={d.a}><Wave />{d.t}</DocTab>)}
          <DocScroll>
            <DocBtn><Chevron c="#c8c8bc" left /></DocBtn>
            <DocBtn $on><Chevron /></DocBtn>
          </DocScroll>
        </DocStrip>
        <ChartFrame>
          <ChartTools>
            <Toggle />
            <Combo $w={96}><ComboText>DAX.I</ComboText><ComboBtn><DownChevron /></ComboBtn></Combo>
            <Combo $w={90}><ComboText>10 Minutos</ComboText><ComboBtn><DownChevron /></ComboBtn></Combo>
            <Combo $w={106}><Candles /><ComboText>Candlestick</ComboText><ComboBtn><DownChevron /></ComboBtn></Combo>
            <ToolBtn $w={23} $on $ml={3}><Cursor /></ToolBtn>
            <ToolBtn $w={23}><Plus /></ToolBtn>
            <ToolBtn $w={23} $on><GridOff /></ToolBtn>
            <ToolBtn $w={19}><Indic /></ToolBtn>
            <ToolBtn $w={13}><SmallCaret /></ToolBtn>
            <ToolBtn $w={23} $on><InfoIcon /></ToolBtn>
            <ToolBtn $w={22}><CrossBox /></ToolBtn>
            <ToolBtn $w={23}><Magnifier /></ToolBtn>
            <ToolBtn $w={23}><b>1:1</b></ToolBtn>
            <ToolBtn $w={24}><Line /></ToolBtn>
            <ToolBtn $w={7}><SmallCaret /></ToolBtn>
            <ToolBtn $w={24}><Eraser /></ToolBtn>
            <ToolBtn $w={24}><Bell /></ToolBtn>
            <ToolBtn $w={23} $on><AutoFit /></ToolBtn>
            <ToolBtn $w={23} $on><MultiTrade /></ToolBtn>
          </ChartTools>
          <Canvas>
            <Chart />
            <Legend $top={2}>
              <LegendText $c="#101030" $w={32}>DAX.I</LegendText><Caret $mr={6} />
              <LegendText $c="#4040ff" $w={35}>MA 11</LegendText><Caret $mr={6} />
              <LegendText $c="#30ff30" $w={36}>MA 22</LegendText><Caret $mr={6} />
              <LegendText $c="#101030" $w={48}>Fibonacci</LegendText><Caret />
            </Legend>
            <Legend $top={310}><LegendText $c="#008000">MACD 26; 12; 9;</LegendText><Caret /></Legend>
            <Legend $top={390}><LegendText $c="#ff1010">PKS 9; 5; 5</LegendText><Caret /></Legend>
            <Info>
              <InfoHead $alt>11-08-06, 15:30</InfoHead>
              {rows.map((r, i) => (
                <InfoRow key={r[0] + i} $alt={i % 2 === 1}>
                  <InfoCell $c={r[2]}>{r[0]}</InfoCell>
                  <InfoCell $c={r[3]}>{r[1]}</InfoCell>
                </InfoRow>
              ))}
            </Info>
            <PriceTag>5632</PriceTag>
          </Canvas>
        </ChartFrame>
        <Status>
          <Pane $w={527} />
          <Pane $w={22} />
          <Pane $w={22}><Plug /></Pane>
          <Pane $w={22}><Lock /></Pane>
          <Pane $w={90} $teal>Simulação</Pane>
          <PaneText $w={125}>Portuguese</PaneText>
          <Grip />
        </Status>
      </Body>
    </Win>
  );
}
